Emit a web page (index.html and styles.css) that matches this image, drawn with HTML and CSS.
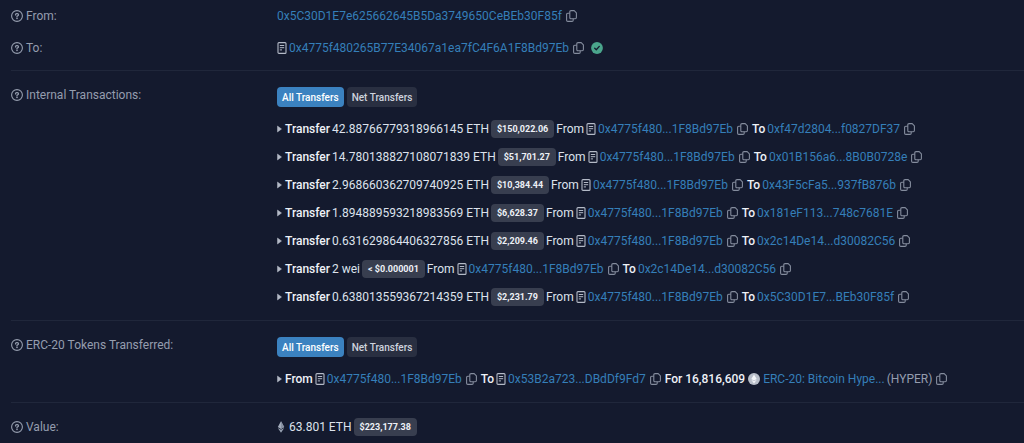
FILE: index.html
```
<!DOCTYPE html>
<html lang="en">
<head>
  <meta charset="UTF-8">
  <meta name="viewport" content="width=device-width, initial-scale=1.0">
  <title>Transaction Details</title>
  <link rel="stylesheet" href="styles.css">
</head>
<body>

  <svg class="sprite" aria-hidden="true">
    <symbol id="help" viewBox="0 0 12 12">
      <circle cx="6" cy="6" r="5.4" fill="none" stroke="currentColor" stroke-width="1.1"/>
      <path d="M4.5 4.9V4.7c0-.7.5-1.1 1.2-1.1h.6c.7 0 1.2.5 1.2 1.1 0 .5-.3.8-.7 1L6 6.2v.6" fill="none" stroke="currentColor" stroke-width="1.2" stroke-linecap="round"/>
      <circle cx="6" cy="8.4" r=".8" fill="currentColor"/>
    </symbol>
    <symbol id="copy" viewBox="0 0 11 12">
      <path d="M5 .6h3.200L10.400 2.800v4.800c0 .8-.4 1.200-1.200 1.200H5c-.8 0-1.200-.4-1.200-1.200V1.800C3.800 1 4.200.6 5 .6z" fill="none" stroke="currentColor" stroke-width="1.100" stroke-linejoin="round"/>
      <path d="M3.800 3.300H1.800c-.8 0-1.200.4-1.200 1.200v5.700c0 .8.4 1.200 1.200 1.200h4.200c.8 0 1.200-.4 1.200-1.200V8.800" fill="none" stroke="currentColor" stroke-width="1.100"/>
    </symbol>
    <symbol id="doc" viewBox="0 0 10 12">
      <rect x="1" y=".6" width="8" height="10.800" rx="1" fill="none" stroke="currentColor" stroke-width="1.100"/>
      <path d="M2.800 3.500h4.400M2.800 5.700h4.400M2.800 7.900h2.200" stroke="currentColor" stroke-width="1"/>
    </symbol>
    <symbol id="caret" viewBox="0 0 5 8">
      <path d="M.5 1v6L4.500 4z" fill="currentColor" stroke="currentColor" stroke-width=".5" stroke-linejoin="round"/>
    </symbol>
    <symbol id="check" viewBox="0 0 12 12">
      <circle cx="6" cy="6" r="5.900" fill="#4aa58c"/>
      <path d="M3.700 6.200l1.600 1.500 3-3.300" fill="none" stroke="#141a2e" stroke-width="1.300" stroke-linecap="round" stroke-linejoin="round"/>
    </symbol>
    <symbol id="eth" viewBox="0 0 8 12">
      <path d="M4 .2L.8 6 4 7.900 7.200 6z" fill="#a3acbc"/>
      <path d="M4 .2V7.900L7.200 6z" fill="#8791a2"/>
      <path d="M.8 6.900L4 11.800l3.200-4.900L4 8.800z" fill="#96a0b1"/>
    </symbol>
    <symbol id="token" viewBox="0 0 12 12">
      <circle cx="6" cy="6" r="6" fill="#b9bfca"/>
      <path d="M6 1.500L3.300 6 6 7.600 8.700 6zM3.300 6.700L6 10.500l2.700-3.800L6 8.200z" fill="#f4f6f9"/>
    </symbol>
  </svg>

  <main class="details">

    <section class="group">
      <div class="row">
        <div class="label"><svg class="icon"><use href="#help"/></svg>From:</div>
        <div class="value line">
          <a href="#">0x5C30D1E7e625662645B5Da3749650CeBEb30F85f</a>
          <button class="copy" aria-label="Copy address"><svg class="icon"><use href="#copy"/></svg></button>
        </div>
      </div>
      <div class="row">
        <div class="label"><svg class="icon"><use href="#help"/></svg>To:</div>
        <div class="value line">
          <span class="address"><svg class="icon doc"><use href="#doc"/></svg><a href="#">0x4775f480265B77E34067a1ea7fC4F6A1F8Bd97Eb</a></span>
          <button class="copy" aria-label="Copy address"><svg class="icon"><use href="#copy"/></svg></button>
          <svg class="icon verified"><use href="#check"/></svg>
        </div>
      </div>
    </section>

    <section class="group">
      <div class="row">
        <div class="label"><svg class="icon"><use href="#help"/></svg>Internal Transactions:</div>
        <div class="value">
          <div class="tabs">
            <button class="tab active">All Transfers</button>
            <button class="tab">Net Transfers</button>
          </div>
          <ul class="transfers">
            <li class="line">
              <svg class="icon caret"><use href="#caret"/></svg><b>Transfer</b><span>42.88766779318966145 ETH</span><span class="badge">$150,022.06</span><span>From</span>
              <span class="address"><svg class="icon doc"><use href="#doc"/></svg><a href="#">0x4775f480...1F8Bd97Eb</a></span>
              <button class="copy" aria-label="Copy address"><svg class="icon"><use href="#copy"/></svg></button>
              <b>To</b><a href="#">0xf47d2804...f0827DF37</a>
              <button class="copy" aria-label="Copy address"><svg class="icon"><use href="#copy"/></svg></button>
            </li>
            <li class="line">
              <svg class="icon caret"><use href="#caret"/></svg><b>Transfer</b><span>14.780138827108071839 ETH</span><span class="badge">$51,701.27</span><span>From</span>
              <span class="address"><svg class="icon doc"><use href="#doc"/></svg><a href="#">0x4775f480...1F8Bd97Eb</a></span>
              <button class="copy" aria-label="Copy address"><svg class="icon"><use href="#copy"/></svg></button>
              <b>To</b><a href="#">0x01B156a6...8B0B0728e</a>
              <button class="copy" aria-label="Copy address"><svg class="icon"><use href="#copy"/></svg></button>
            </li>
            <li class="line">
              <svg class="icon caret"><use href="#caret"/></svg><b>Transfer</b><span>2.968660362709740925 ETH</span><span class="badge">$10,384.44</span><span>From</span>
              <span class="address"><svg class="icon doc"><use href="#doc"/></svg><a href="#">0x4775f480...1F8Bd97Eb</a></span>
              <button class="copy" aria-label="Copy address"><svg class="icon"><use href="#copy"/></svg></button>
              <b>To</b><a href="#">0x43F5cFa5...937fB876b</a>
              <button class="copy" aria-label="Copy address"><svg class="icon"><use href="#copy"/></svg></button>
            </li>
            <li class="line">
              <svg class="icon caret"><use href="#caret"/></svg><b>Transfer</b><span>1.894889593218983569 ETH</span><span class="badge">$6,628.37</span><span>From</span>
              <span class="address"><svg class="icon doc"><use href="#doc"/></svg><a href="#">0x4775f480...1F8Bd97Eb</a></span>
              <button class="copy" aria-label="Copy address"><svg class="icon"><use href="#copy"/></svg></button>
              <b>To</b><a href="#">0x181eF113...748c7681E</a>
              <button class="copy" aria-label="Copy address"><svg class="icon"><use href="#copy"/></svg></button>
            </li>
            <li class="line">
              <svg class="icon caret"><use href="#caret"/></svg><b>Transfer</b><span>0.631629864406327856 ETH</span><span class="badge">$2,209.46</span><span>From</span>
              <span class="address"><svg class="icon doc"><use href="#doc"/></svg><a href="#">0x4775f480...1F8Bd97Eb</a></span>
              <button class="copy" aria-label="Copy address"><svg class="icon"><use href="#copy"/></svg></button>
              <b>To</b><a href="#">0x2c14De14...d30082C56</a>
              <button class="copy" aria-label="Copy address"><svg class="icon"><use href="#copy"/></svg></button>
            </li>
            <li class="line">
              <svg class="icon caret"><use href="#caret"/></svg><b>Transfer</b><span>2 wei</span><span class="badge">&lt; $0.000001</span><span>From</span>
              <span class="address"><svg class="icon doc"><use href="#doc"/></svg><a href="#">0x4775f480...1F8Bd97Eb</a></span>
              <button class="copy" aria-label="Copy address"><svg class="icon"><use href="#copy"/></svg></button>
              <b>To</b><a href="#">0x2c14De14...d30082C56</a>
              <button class="copy" aria-label="Copy address"><svg class="icon"><use href="#copy"/></svg></button>
            </li>
            <li class="line">
              <svg class="icon caret"><use href="#caret"/></svg><b>Transfer</b><span>0.638013559367214359 ETH</span><span class="badge">$2,231.79</span><span>From</span>
              <span class="address"><svg class="icon doc"><use href="#doc"/></svg><a href="#">0x4775f480...1F8Bd97Eb</a></span>
              <button class="copy" aria-label="Copy address"><svg class="icon"><use href="#copy"/></svg></button>
              <b>To</b><a href="#">0x5C30D1E7...BEb30F85f</a>
              <button class="copy" aria-label="Copy address"><svg class="icon"><use href="#copy"/></svg></button>
            </li>
          </ul>
        </div>
      </div>
    </section>

    <section class="group">
      <div class="row">
        <div class="label"><svg class="icon"><use href="#help"/></svg>ERC-20 Tokens Transferred:</div>
        <div class="value">
          <div class="tabs">
            <button class="tab active">All Transfers</button>
            <button class="tab">Net Transfers</button>
          </div>
          <ul class="transfers">
            <li class="line">
              <svg class="icon caret"><use href="#caret"/></svg><b>From</b>
              <span class="address"><svg class="icon doc"><use href="#doc"/></svg><a href="#">0x4775f480...1F8Bd97Eb</a></span>
              <button class="copy" aria-label="Copy address"><svg class="icon"><use href="#copy"/></svg></button>
              <b>To</b>
              <span class="address"><svg class="icon doc"><use href="#doc"/></svg><a href="#">0x53B2a723...DBdDf9Fd7</a></span>
              <button class="copy" aria-label="Copy address"><svg class="icon"><use href="#copy"/></svg></button>
              <b>For 16,816,609</b>
              <svg class="icon token"><use href="#token"/></svg>
              <a href="#">ERC-20: Bitcoin Hype...</a><span class="muted">(HYPER)</span>
              <button class="copy" aria-label="Copy token address"><svg class="icon"><use href="#copy"/></svg></button>
            </li>
          </ul>
        </div>
      </div>
    </section>

    <section class="group">
      <div class="row">
        <div class="label"><svg class="icon"><use href="#help"/></svg>Value:</div>
        <div class="value line">
          <svg class="icon eth"><use href="#eth"/></svg><span>63.801 ETH</span><span class="badge">$223,177.38</span>
        </div>
      </div>
    </section>

  </main>

</body>
</html>
```
FILE: styles.css
```
* {
  box-sizing: border-box;
}

body {
  margin: 0;
  background: #141a2e;
  color: #dde2ec;
  font-family: Roboto, sans-serif;
  font-size: 12px;
  line-height: 20px;
}

.sprite {
  display: none;
}

.details {
  padding-left: 11px;
}

.group {
  padding: 14px 0 9px;
  border-bottom: 1px solid #20273b;
}

.group:first-child {
  padding: 6px 0 12px;
}

.group:last-child {
  border-bottom: 0;
  padding-bottom: 0;
}

.row {
  display: grid;
  grid-template-columns: 266px 1fr;
}

.row + .row {
  margin-top: 12px;
}

.label {
  display: flex;
  align-items: center;
  align-self: start;
  gap: 3px;
  color: #959dae;
}

.line {
  display: flex;
  align-items: center;
  gap: 2px;
  white-space: nowrap;
}

.icon {
  flex: none;
  width: 12px;
  height: 12px;
}

a {
  color: #357fb9;
  text-decoration: none;
}

b {
  font-weight: 500;
  color: #eef1f7;
}

.address {
  display: flex;
  align-items: center;
  gap: 2px;
}

.doc {
  width: 10px;
  color: #b4bac7;
}

.copy {
  display: flex;
  padding: 0;
  margin: 0 2px;
  border: 0;
  background: none;
  color: #848c9d;
  cursor: pointer;
}

.copy .icon {
  width: 11px;
}

.verified {
  margin-left: 3px;
}

.tabs {
  display: flex;
  gap: 3px;
  padding-top: 2px;
}

.tab {
  height: 20px;
  padding: 0 5px;
  border: 0;
  border-radius: 4px;
  background: #292f41;
  color: #ced3de;
  font-family: inherit;
  font-size: 10px;
  font-weight: 500;
  cursor: pointer;
}

.tab.active {
  background: #3b82c0;
  color: #fff;
}

.transfers {
  margin: 8px 0 0;
  padding: 0;
  list-style: none;
}

.transfers .line {
  height: 28px;
}

.caret {
  width: 5px;
  height: 8px;
  margin-right: 1px;
  color: #b4bac7;
}

.badge {
  padding: 0 6px;
  border-radius: 4px;
  background: #383e4f;
  color: #edf0f6;
  font-size: 9px;
  font-weight: 700;
  line-height: 18px;
}

.muted {
  color: #959dae;
}

.token {
  margin: 0 1px;
}

.eth {
  width: 8px;
  margin-right: 2px;
}
```
